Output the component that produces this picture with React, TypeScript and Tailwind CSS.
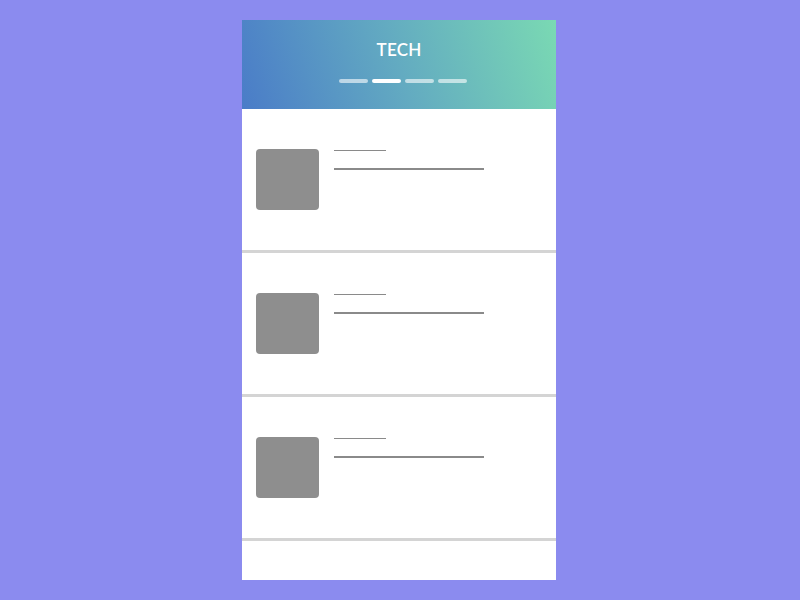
import React from "react";

function Item() {
  return (
    <div className="h-[144px] shrink-0 border-b-[3px] border-[#d4d4d4] flex items-center pl-[14px] bg-white">
      <div className="w-[63px] h-[61px] rounded-[4px] bg-[#8e8e8e] shrink-0" />
      <div className="ml-[15px] flex flex-col self-start mt-[41px]">
        <div className="w-[52px] h-px bg-[#8a8a8a]" />
        <div className="w-[150px] h-[2px] bg-[#8a8a8a] mt-[17px]" />
      </div>
    </div>
  );
}

export default function App() {
  return (
    <div className="w-[800px] h-[600px] bg-[#8b8bef] flex justify-center pt-[20px] pr-[2px]">
      <div className="w-[314px] h-[560px] bg-white flex flex-col overflow-hidden">
        <div className="h-[89px] shrink-0 bg-linear-[72deg] from-[#4a7cc8] via-[#63abc1] to-[#7ad9b3] flex flex-col items-center">
          <div
            className="mt-[19px] text-white text-[17px] leading-[22px] font-semibold tracking-[0.2px]"
            style={{ fontFamily: "Lato, 'Open Sans', sans-serif" }}
          >
            TECH
          </div>
          <div className="mt-[18px] flex gap-[4px] pl-[7px]">
            <div className="w-[29px] h-[4px] rounded-full bg-white/60" />
            <div className="w-[29px] h-[4px] rounded-full bg-white" />
            <div className="w-[29px] h-[4px] rounded-full bg-white/60" />
            <div className="w-[29px] h-[4px] rounded-full bg-white/60" />
          </div>
        </div>
        <Item />
        <Item />
        <Item />
        <div className="flex-1 bg-white" />
      </div>
    </div>
  );
}
